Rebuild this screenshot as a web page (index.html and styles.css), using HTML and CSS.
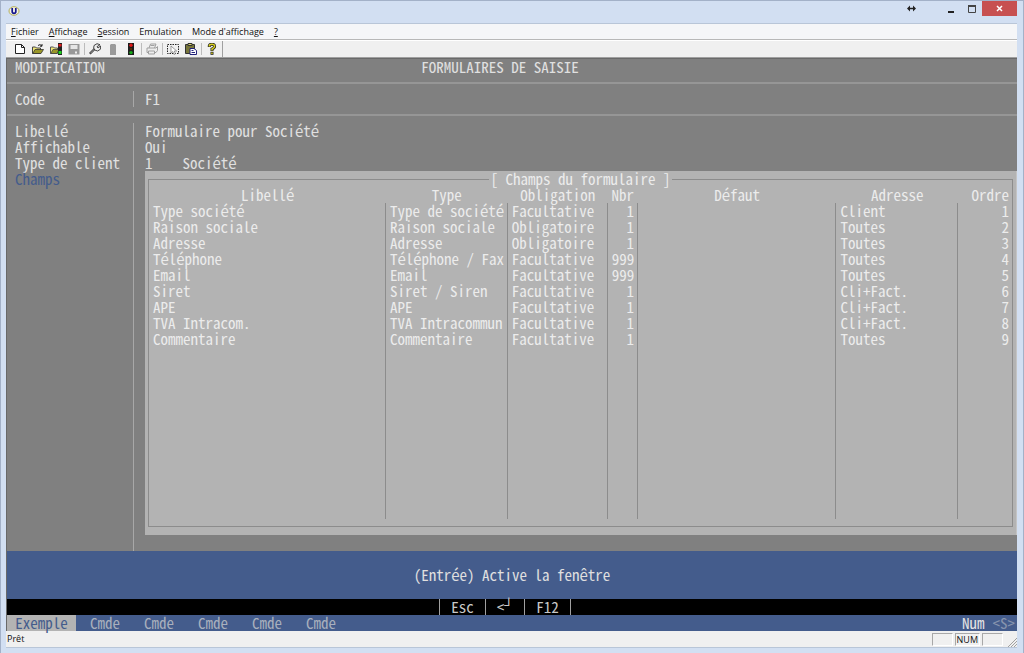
FILE: index.html
```html
<!DOCTYPE html>
<html lang="fr">
<head>
<meta charset="utf-8">
<title>Formulaires de saisie</title>
<link rel="stylesheet" href="styles.css">
</head>
<body>
<div class="window">
  <header class="titlebar">
    <svg class="app-icon" width="12" height="10" viewBox="0 0 12 10"><ellipse cx="6" cy="5" rx="5" ry="4.3" fill="#f4f4ea" stroke="#b5ad55"/><path d="M4.2 2v3.5q0 1.800 1.800 1.800t1.800-1.800V2" fill="none" stroke="#15158c" stroke-width="1.700"/></svg>
    <div class="caption">
      <button class="cap cap-arrow" aria-label="Déplacer"><svg width="9" height="7" viewBox="0 0 9 7"><path d="M0 3.500L3 .5v6zM9 3.500L6 .5v6z" fill="#222"/><path d="M2 3.500h5" stroke="#222" stroke-width="1.500"/></svg></button>
      <button class="cap" aria-label="Réduire"><svg width="8" height="8" viewBox="0 0 8 8"><path d="M1 6h6v2H1z" fill="#222"/></svg></button>
      <button class="cap" aria-label="Agrandir"><svg width="8" height="8" viewBox="0 0 8 8"><path d="M.5 1.500h7v6h-7z" fill="none" stroke="#444"/><path d="M0 0h8v2H0z" fill="#444"/></svg></button>
      <button class="cap cap-close" aria-label="Fermer"><svg width="7" height="7" viewBox="0 0 7 7"><path d="M1 1l5 5M6 1L1 6" stroke="#fff" stroke-width="1.500"/></svg></button>
    </div>
  </header>

  <div class="client">
    <nav class="menubar">
      <button><u>F</u>ichier</button>
      <button><u>A</u>ffichage</button>
      <button><u>S</u>ession</button>
      <button>Emulation</button>
      <button>Mode d'affichage</button>
      <button><u>?</u></button>
    </nav>

    <div class="toolbar">
      <div class="tools">
        <button aria-label="Nouveau"><svg viewBox="0 0 12 12"><path d="M1.500 1.500h6l3 3v6h-9z" fill="#fff" stroke="#222"/><path d="M7.500 1.500v3h3" fill="none" stroke="#222"/></svg></button>
        <button aria-label="Ouvrir"><svg viewBox="0 0 12 12"><path d="M.5 10.500V4h3l1 1h4v5.500z" fill="#f0e878" stroke="#444"/><path d="M.8 10.500L3 6.500h8.500l-2.500 4z" fill="#9a9728" stroke="#333" stroke-width=".8"/><path d="M6 2.500q2-2 4 .5m0-2v2.200H8" fill="none" stroke="#222"/></svg></button>
        <button aria-label="Ouvrir et connecter"><svg viewBox="0 0 12 12"><path d="M.5 10.500V4h3l1 1h3v5.500z" fill="#f0e878" stroke="#555"/><path d="M.8 10.500L3 6.500h6l-2 4z" fill="#9a9728" stroke="#444" stroke-width=".8"/><path d="M8 0h4v12H8z" fill="#222"/><path d="M8.500 1h3v2.500h-3z" fill="#e02020"/><path d="M8.500 8h3v3h-3z" fill="#20d020"/></svg></button>
        <button aria-label="Enregistrer"><svg viewBox="0 0 12 12"><path d="M.5 1h11v10.500H.5z" fill="#989898"/><path d="M2.500 2h7v4h-7z" fill="#e6e6e6"/><path d="M7 8.500h2v2H7z" fill="#ededed"/></svg></button>
        <span class="sep"></span>
        <button aria-label="Configurer"><svg viewBox="0 0 12 12"><path d="M.8 10.800L6 5.500" stroke="#333" stroke-width="2.200"/><path d="M1.200 10.400L6 5.500" stroke="#ddd" stroke-width=".7"/><path d="M5 2.500L8 .7l3 1-3 2 1 1.300 2.500-2 .2 3-3 2-3-1-1-2z" fill="#eee" stroke="#333" stroke-width=".9"/></svg></button>
        <button aria-label="Connecter"><svg viewBox="0 0 12 12"><path d="M3 2l1-1h4l1 1v10H3z" fill="#9a9a9a"/></svg></button>
        <button aria-label="Déconnecter"><svg viewBox="0 0 12 12"><path d="M3 0h6v12H3z" fill="#1c1c1c"/><circle cx="6" cy="2.300" r="1.700" fill="#e01818"/><circle cx="6" cy="6" r="1.200" fill="#5a2a08"/><circle cx="6" cy="9.600" r="1.700" fill="#18a818"/></svg></button>
        <span class="sep"></span>
        <button aria-label="Imprimer"><svg viewBox="0 0 12 12" fill="#eee" stroke="#a0a0a0"><path d="M3 5l1.500-4H10L8.500 5"/><path d="M1 5h9l1.500-1.500v4L10 9.500H1z"/><path d="M2.500 8h6v3h-6zM4.500 2.500h4"/></svg></button>
        <span class="sep"></span>
        <button aria-label="Sélectionner"><svg viewBox="0 0 12 12"><path d="M.5 1.500h11v9H.5z" fill="none" stroke="#222" stroke-dasharray="1.500 1"/><path d="M4 3v7l1.800-1.500L7 11.500l1.400-.6L7.300 8h2.400z" fill="#fff" stroke="#777" stroke-width=".7"/></svg></button>
        <button aria-label="Coller"><svg viewBox="0 0 12 12"><path d="M.5 1.500h9v9h-9z" fill="#77753a" stroke="#333"/><path d="M3 .5h4v2H3z" fill="#ddd36a" stroke="#333"/><path d="M5 5.500h4l2.500 2v4H5z" fill="#fff" stroke="#22227a"/><path d="M6.500 7.500h2M6.500 9.500H10" stroke="#22227a"/></svg></button>
        <span class="sep"></span>
        <button aria-label="Aide"><svg viewBox="0 0 12 12"><path d="M3.300 4V2.800Q3.500 1.200 6 1.200t2.600 2Q8.600 4.700 6 6v2" fill="none" stroke="#222" stroke-width="3"/><path d="M3.300 3.600v-.8Q3.500 1.200 6 1.200t2.600 2Q8.600 4.700 6 6v1.500" fill="none" stroke="#d8cf20" stroke-width="1.500"/><path d="M4.500 8.800h3v3h-3z" fill="#222"/><path d="M5.200 9.500h1.500V11H5.200z" fill="#d8cf20"/></svg></button>
      </div>
    </div>

    <main class="terminal">
      <div class="heading"><span>MODIFICATION</span><h1>FORMULAIRES DE SAISIE</h1><span></span></div>
      <hr>
      <dl class="record"><dt>Code</dt><dd>F1</dd></dl>
      <hr>
      <div class="form">
        <ul class="labels">
          <li>Libellé</li><li>Affichable</li><li>Type de client</li><li class="current">Champs</li>
        </ul>
        <div class="values">
          <p>Formulaire pour Société</p>
          <p>Oui</p>
          <p class="pair"><span>1</span><span>Société</span></p>
          <div class="panel">
            <fieldset>
              <legend>[ Champs du formulaire ]</legend>
              <table>
                <colgroup><col class="c-lib"><col class="c-type"><col class="c-obl"><col class="c-nbr"><col class="c-def"><col class="c-adr"><col class="c-ord"></colgroup>
                <thead><tr><th>Libellé</th><th>Type</th><th>Obligation</th><th>Nbr</th><th>Défaut</th><th>Adresse</th><th class="num">Ordre</th></tr></thead>
                <tbody>
                  <tr><td>Type société</td><td>Type de société</td><td>Facultative</td><td class="num">1</td><td></td><td>Client</td><td class="num">1</td></tr>
                  <tr><td>Raison sociale</td><td>Raison sociale</td><td>Obligatoire</td><td class="num">1</td><td></td><td>Toutes</td><td class="num">2</td></tr>
                  <tr><td>Adresse</td><td>Adresse</td><td>Obligatoire</td><td class="num">1</td><td></td><td>Toutes</td><td class="num">3</td></tr>
                  <tr><td>Téléphone</td><td>Téléphone / Fax</td><td>Facultative</td><td class="num">999</td><td></td><td>Toutes</td><td class="num">4</td></tr>
                  <tr><td>Email</td><td>Email</td><td>Facultative</td><td class="num">999</td><td></td><td>Toutes</td><td class="num">5</td></tr>
                  <tr><td>Siret</td><td>Siret / Siren</td><td>Facultative</td><td class="num">1</td><td></td><td>Cli+Fact.</td><td class="num">6</td></tr>
                  <tr><td>APE</td><td>APE</td><td>Facultative</td><td class="num">1</td><td></td><td>Cli+Fact.</td><td class="num">7</td></tr>
                  <tr><td>TVA Intracom.</td><td>TVA Intracommun</td><td>Facultative</td><td class="num">1</td><td></td><td>Cli+Fact.</td><td class="num">8</td></tr>
                  <tr><td>Commentaire</td><td>Commentaire</td><td>Facultative</td><td class="num">1</td><td></td><td>Toutes</td><td class="num">9</td></tr>
                  <tr class="filler"><td></td><td></td><td></td><td></td><td></td><td></td><td></td></tr>
                </tbody>
              </table>
            </fieldset>
          </div>
        </div>
      </div>
      <p class="message">(Entrée) Active la fenêtre</p>
      <div class="keys"><button>Esc</button><button>&lt;<span class="corner">┘</span></button><button>F12</button></div>
      <div class="commands">
        <button class="active">Exemple</button><button>Cmde</button><button>Cmde</button><button>Cmde</button><button>Cmde</button><button>Cmde</button>
        <span class="lock">Num</span><span class="mode">&lt;S&gt;</span>
      </div>
    </main>

    <footer class="statusbar">
      <span class="ready">Prêt</span>
      <span class="well"></span><span class="well">NUM</span><span class="well"></span>
      <svg class="grip" width="10" height="10" viewBox="0 0 10 10"><path d="M1 10l9-9M4 10l6-6M7 10l3-3" stroke="#a0a0a0"/></svg>
    </footer>
  </div>
</div>
</body>
</html>
```
FILE: styles.css
```css
* { box-sizing: border-box; }
body, h1, p, dl, dt, dd, ul { margin: 0; padding: 0; }
button {
  margin: 0;
  padding: 0;
  border: 0;
  background: none;
  color: inherit;
  font: inherit;
}
ul { list-style: none; }

.window {
  display: flex;
  flex-direction: column;
  min-height: 100vh;
  padding: 0 6px 5px 5px;
  border: 1px solid #a3b1c8;
  border-bottom: 0;
  background: #d2dff2;
  font: 9px/15px "Open Sans", "Noto Sans", sans-serif;
  color: #111;
}

.titlebar {
  display: flex;
  justify-content: space-between;
  height: 22px;
}
.app-icon { margin: 5px 0 0 2px; }
.caption { display: flex; }
.cap {
  display: flex;
  align-items: center;
  justify-content: center;
  width: 21px;
  height: 15px;
}
.cap-arrow { margin-right: 18px; }
.cap-close {
  width: 35px;
  background: #c75050;
}

.client {
  display: flex;
  flex: 1;
  flex-direction: column;
  border: 1px solid #b9c6d8;
  border-width: 1px 0 1px;
  background: #f0f0f0;
}
.menubar {
  display: flex;
  gap: 10px;
  height: 16px;
  padding-left: 5px;
  border-bottom: 1px solid #b8b8b8;
  background: #f5f6f8;
}
.toolbar {
  height: 18px;
  border-top: 1px solid #fff;
  border-bottom: 1px solid #a0a0a0;
}
.tools {
  display: inline-flex;
  height: 16px;
  padding: 0 1px 0 5px;
  border-right: 1px solid #a0a0a0;
}
.tools button {
  width: 18px;
  height: 16px;
  padding: 1px 3px;
}
.tools svg {
  display: block;
  width: 12px;
  height: 12px;
}
.sep {
  width: 1px;
  margin: 2px 1px;
  background: #bcbcbc;
}

.terminal {
  display: flex;
  flex: 1;
  flex-direction: column;
  border-left: 1px solid #696969;
  border-top: 1px solid #696969;
  background: #808080;
  color: #e0e0e0;
  font: 300 15px/16px "Noto Sans Mono CJK JP", "Liberation Mono", monospace;
}
.heading {
  display: grid;
  grid-template-columns: 1fr auto 1fr;
  padding: 0 32px 0 8px;
}
.heading h1 { font: inherit; }
hr {
  width: 100%;
  height: 2px;
  margin: 7px 0;
  border: 0;
  background: #969696;
}
.record {
  display: flex;
  padding-left: 8px;
}
.record dt {
  width: 119px;
  border-right: 1px solid #a8a8a8;
}
.record dd { padding-left: 11px; }

.form {
  display: flex;
  flex: 1;
}
.labels {
  flex: none;
  width: 127px;
  padding-left: 8px;
  border-right: 1px solid #a8a8a8;
}
.labels .current { color: #445c8c; }
.values {
  flex: 1;
  padding: 0 0 16px 11px;
}
.pair {
  display: flex;
  gap: 30px;
}
.panel {
  padding: 0 3px 8px 3px;
  border-right: 1px solid #c4c4c4;
  background: #b3b3b3;
  color: #ececec;
}
fieldset {
  min-width: 0;
  margin: 0;
  padding: 0 0 7px;
  border: 1px solid #8c8c8c;
}
legend {
  margin: 0 auto;
  padding: 0 1px;
}
table {
  width: 100%;
  border-collapse: collapse;
  table-layout: fixed;
}
.c-lib { width: 27.400%; }
.c-type { width: 14.100%; }
.c-obl { width: 11.600%; }
.c-nbr { width: 3.500%; }
.c-def { width: 23%; }
.c-adr { width: 14.100%; }
.c-ord { width: 6.300%; }
th, td {
  height: 16px;
  padding: 0 3px 0 4px;
  font-weight: inherit;
  white-space: nowrap;
}
td { border-right: 1px solid #8c8c8c; }
td:last-child { border-right: 0; }
.num { text-align: right; }
.filler td { height: 172px; }

.message {
  padding: 16px 0;
  background: #445c8c;
  text-align: center;
}
.keys {
  display: flex;
  justify-content: center;
  padding-right: 14px;
  background: #000;
  color: #c8c8c8;
}
.keys button {
  height: 16px;
  padding: 0 11px;
  border-right: 1px solid #a0a0a0;
}
.keys button:first-child { border-left: 1px solid #a0a0a0; }
.corner {
  font-family: "Liberation Mono", monospace;
  vertical-align: top;
}
.commands {
  display: flex;
  background: #445c8c;
  color: #a9b0bd;
}
.commands button { width: 54px; }
.commands .active {
  width: 69px;
  margin-right: 2px;
  background: #b3b3b3;
  color: #445c8c;
}
.lock {
  margin-left: auto;
  color: #e4e4e4;
}
.mode {
  margin: 0 2px 0 8px;
  color: #8794ae;
}

.statusbar {
  display: flex;
  gap: 2px;
  height: 16px;
  padding-top: 2px;
  line-height: 12px;
}
.ready {
  flex: 1;
  padding-left: 1px;
}
.well {
  min-width: 21px;
  height: 13px;
  padding: 0 1px;
  border: 1px solid #a8a8a8;
  border-right-color: #fff;
  border-bottom-color: #fff;
}
.grip {
  align-self: flex-end;
  margin-left: 2px;
}
```
